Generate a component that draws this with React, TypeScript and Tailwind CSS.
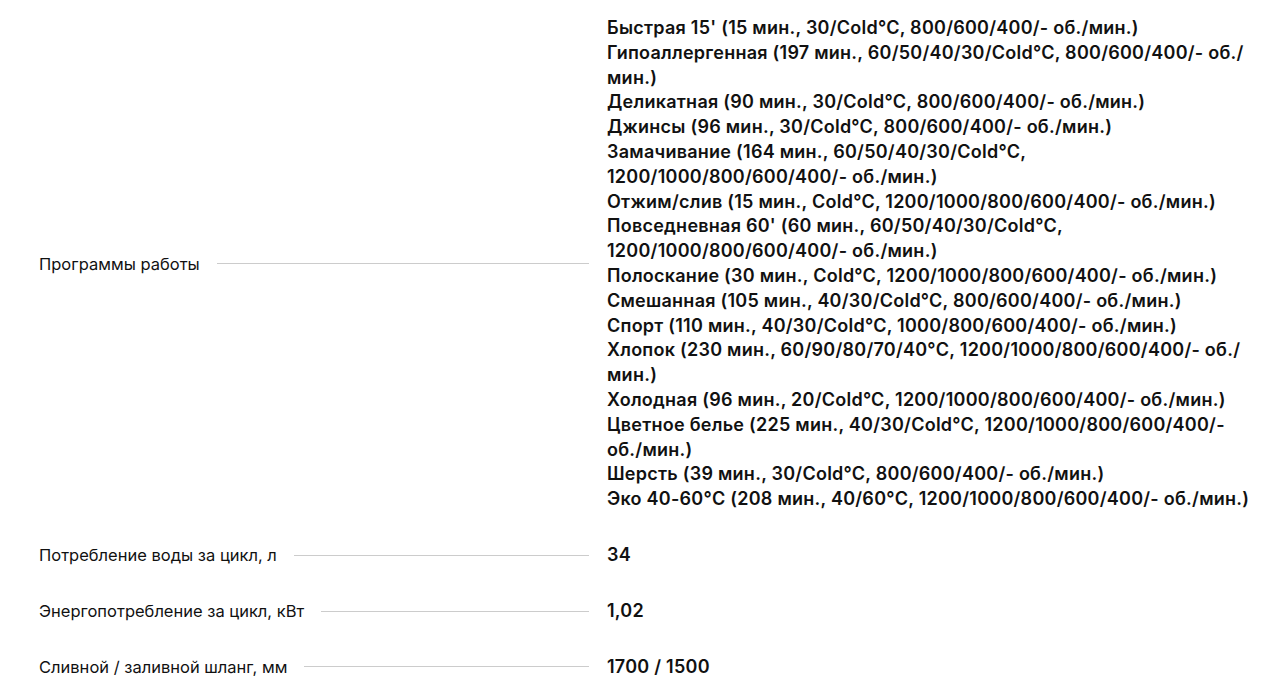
import * as React from "react";

const programs = [
  "Быстрая 15' (15 мин., 30/Cold°C, 800/600/400/- об./мин.)",
  "Гипоаллергенная (197 мин., 60/50/40/30/Cold°C, 800/600/400/- об./мин.)",
  "Деликатная (90 мин., 30/Cold°C, 800/600/400/- об./мин.)",
  "Джинсы (96 мин., 30/Cold°C, 800/600/400/- об./мин.)",
  "Замачивание (164 мин., 60/50/40/30/Cold°C, 1200/1000/800/600/400/- об./мин.)",
  "Отжим/слив (15 мин., Cold°C, 1200/1000/800/600/400/- об./мин.)",
  "Повседневная 60' (60 мин., 60/50/40/30/Cold°C, 1200/1000/800/600/400/- об./мин.)",
  "Полоскание (30 мин., Cold°C, 1200/1000/800/600/400/- об./мин.)",
  "Смешанная (105 мин., 40/30/Cold°C, 800/600/400/- об./мин.)",
  "Спорт (110 мин., 40/30/Cold°C, 1000/800/600/400/- об./мин.)",
  "Хлопок (230 мин., 60/90/80/70/40°C, 1200/1000/800/600/400/- об./мин.)",
  "Холодная (96 мин., 20/Cold°C, 1200/1000/800/600/400/- об./мин.)",
  "Цветное белье (225 мин., 40/30/Cold°C, 1200/1000/800/600/400/- об./мин.)",
  "Шерсть (39 мин., 30/Cold°C, 800/600/400/- об./мин.)",
  "Эко 40-60°C (208 мин., 40/60°C, 1200/1000/800/600/400/- об./мин.)",
];

function SpecRow({ label, children }: { label: string; children: React.ReactNode }) {
  return (
    <div className="flex items-center gap-[18px]">
      <div className="flex w-[550px] shrink-0 items-center gap-[17px]">
        <span className="whitespace-nowrap text-[16.5px] leading-[22px] text-[#111]">{label}</span>
        <div className="h-px flex-1 bg-[#cccccc]" />
      </div>
      <div className="w-[652px] text-[18px] font-semibold leading-[24.8px] tracking-[0.25px] text-[#111]">
        {children}
      </div>
    </div>
  );
}

export default function App() {
  return (
    <div className="min-h-[685px] bg-white pl-[39px] pt-[16px] font-['Inter',sans-serif]">
      <div className="flex flex-col gap-[31px]">
        <SpecRow label="Программы работы">
          {programs.map((p) => (
            <div key={p}>{p}</div>
          ))}
        </SpecRow>
        <SpecRow label="Потребление воды за цикл, л">34</SpecRow>
        <SpecRow label="Энергопотребление за цикл, кВт">1,02</SpecRow>
        <SpecRow label="Сливной / заливной шланг, мм">1700 / 1500</SpecRow>
      </div>
    </div>
  );
}
